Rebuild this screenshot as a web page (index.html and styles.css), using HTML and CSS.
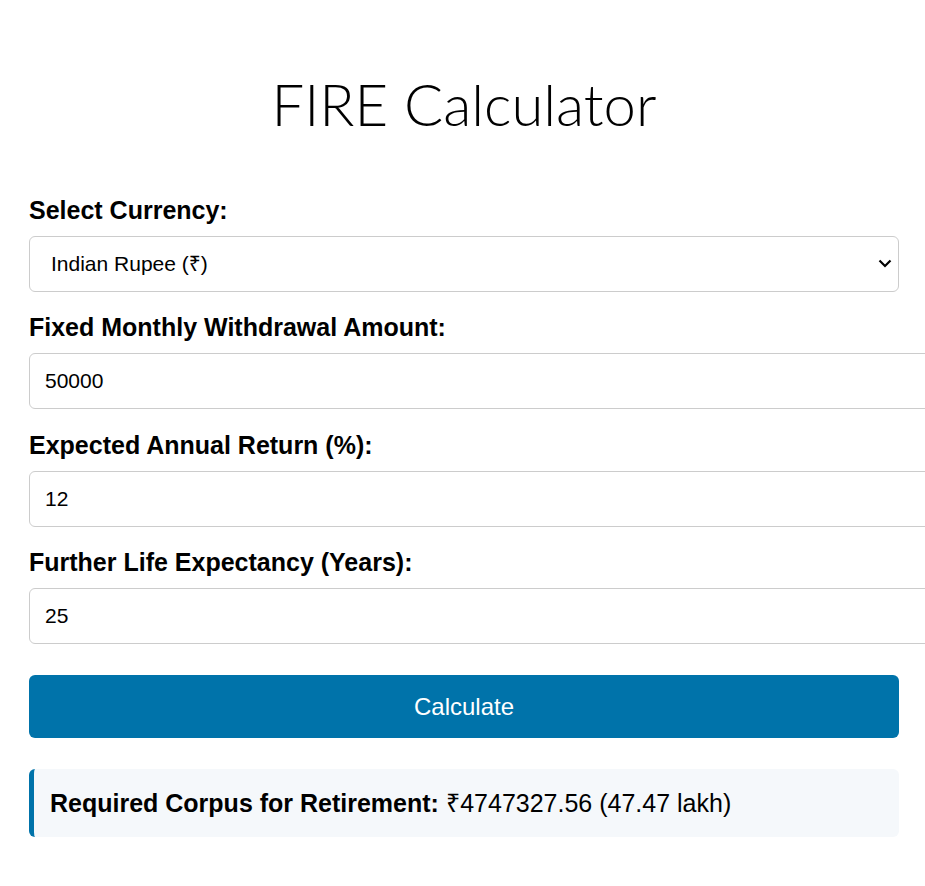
FILE: index.html
```html
<!DOCTYPE html>
<html lang="en">
<head>
    <meta charset="UTF-8">
    <meta name="viewport" content="width=device-width, initial-scale=1.0">
    <title>FIRE Calculator</title>
    <link rel="stylesheet" href="styles.css">
</head>
<body>
    <div class="container">
        <h1>FIRE Calculator</h1>

        <form class="calc-form" onsubmit="return false;">
            <div class="field">
                <label for="currency">Select Currency:</label>
                <select id="currency">
                    <option value="INR" selected>Indian Rupee (₹)</option>
                    <option value="USD">US Dollar ($)</option>
                    <option value="EUR">Euro (€)</option>
                </select>
            </div>

            <div class="field">
                <label for="withdrawal">Fixed Monthly Withdrawal Amount:</label>
                <input type="number" id="withdrawal" value="50000">
            </div>

            <div class="field">
                <label for="return">Expected Annual Return (%):</label>
                <input type="number" id="return" value="12">
            </div>

            <div class="field">
                <label for="years">Further Life Expectancy (Years):</label>
                <input type="number" id="years" value="25">
            </div>

            <button type="button" class="button">Calculate</button>
        </form>

        <div class="result">
            <strong>Required Corpus for Retirement:</strong> ₹4747327.56 (47.47 lakh)
        </div>
    </div>
</body>
</html>
```

FILE: styles.css
```css
:root {
    --primary: #0073aa;
    --border: #cccccc;
    --result-bg: #f5f8fb;
    --text: #000000;
}

body {
    font-family: "Liberation Sans", Arial, "Noto Sans", sans-serif;
    color: var(--text);
    background-color: #ffffff;
    margin: 0;
}

.container {
    padding: 0 26px 40px 29px;
}

h1 {
    font-family: Lato, "Noto Sans", sans-serif;
    font-weight: 300;
    font-size: 58px;
    line-height: 1.2;
    text-align: center;
    margin: 69px 0 57px;
}

.field {
    margin-bottom: 21.5px;
}

.field label {
    display: block;
    font-size: 25px;
    font-weight: bold;
    line-height: 28px;
    margin-bottom: 12px;
}

.field input,
.field select {
    font-family: "Liberation Sans", Arial, "Noto Sans", sans-serif;
    font-size: 21px;
    color: #000;
    padding: 15px;
    border: 1px solid var(--border);
    border-radius: 6px;
    background-color: #fff;
}

.field input {
    width: 100%;
    line-height: 24px;
}

.field select {
    width: 100%;
    height: 56px;
    padding: 0 12px 0 21px;
    appearance: none;
    -webkit-appearance: none;
    background-image: url("data:image/svg+xml;utf8,<svg xmlns='http://www.w3.org/2000/svg' width='14' height='9' viewBox='0 0 14 9'><path d='M1.5 1.5 L7 7 L12.5 1.5' fill='none' stroke='%23000' stroke-width='2.2'/></svg>");
    background-repeat: no-repeat;
    background-position: right 6px center;
}

.button {
    display: block;
    width: 100%;
    margin-top: 31px;
    background-color: var(--primary);
    color: #ffffff;
    border: none;
    border-radius: 6px;
    padding: 18px 0;
    font-family: "Liberation Sans", Arial, sans-serif;
    font-size: 24px;
    line-height: 27px;
    cursor: pointer;
}

.result {
    margin-top: 31px;
    background-color: var(--result-bg);
    border-left: 5px solid var(--primary);
    border-radius: 6px;
    padding: 20px 16px 20px;
    font-size: 25px;
    line-height: 28px;
}
```
